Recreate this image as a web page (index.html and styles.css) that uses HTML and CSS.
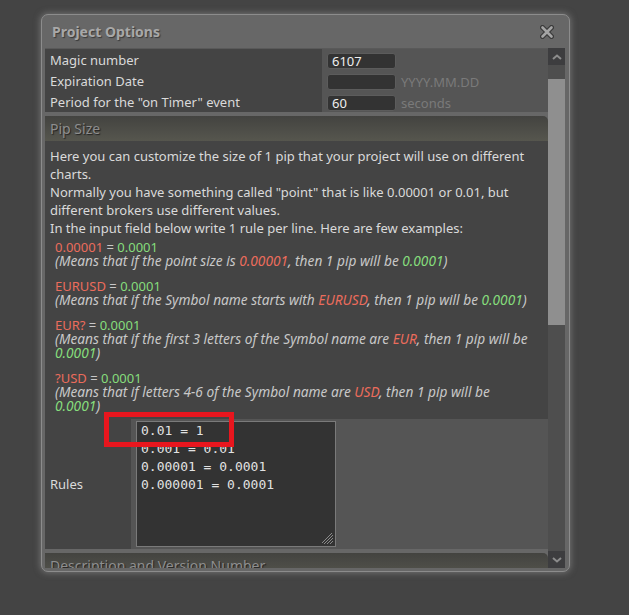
FILE: index.html
```html
<!DOCTYPE html>
<html lang="en">
<head>
  <meta charset="UTF-8">
  <title>Project Options</title>
  <link rel="stylesheet" href="styles.css">
</head>
<body>

  <div class="dialog">
    <div class="titlebar">
      <span class="title">Project Options</span>
      <svg class="close" width="14" height="14" viewBox="0 0 14 14">
        <path d="M2.5 2.5 L11.5 11.5 M11.5 2.5 L2.5 11.5" stroke="#3a3a3a" stroke-width="5" stroke-linecap="round"/>
        <path d="M2.5 2.5 L11.5 11.5 M11.5 2.5 L2.5 11.5" stroke="#a4a4a4" stroke-width="2.6" stroke-linecap="round"/>
      </svg>
    </div>

    <div class="frame">
      <div class="content">

        <!-- General options -->
        <div class="options">
          <div class="label">Magic number</div>
          <div class="value"><input class="field" type="text" value="6107"></div>
          <div class="label">Expiration Date</div>
          <div class="value"><input class="field" type="text" value=""><span class="hint">YYYY.MM.DD</span></div>
          <div class="label">Period for the "on Timer" event</div>
          <div class="value"><input class="field" type="text" value="60"><span class="hint">seconds</span></div>
        </div>

        <!-- Pip Size -->
        <div class="section">
          <div class="section-head">Pip Size</div>
          <div class="section-text">
            <p class="intro">Here you can customize the size of 1 pip that your project will use on different charts.<br>
            Normally you have something called "point" that is like 0.00001 or 0.01, but different brokers use different values.<br>
            In the input field below write 1 rule per line. Here are few examples:</p>

            <div class="example">
              <span class="red">0.00001</span> = <span class="green">0.0001</span><br>
              <i>(Means that if the point size is <span class="red">0.00001</span>, then 1 pip will be <span class="green">0.0001</span>)</i>
            </div>
            <div class="example">
              <span class="red">EURUSD</span> = <span class="green">0.0001</span><br>
              <i>(Means that if the Symbol name starts with <span class="red">EURUSD</span>, then 1 pip will be <span class="green">0.0001</span>)</i>
            </div>
            <div class="example">
              <span class="red">EUR?</span> = <span class="green">0.0001</span><br>
              <i>(Means that if the first 3 letters of the Symbol name are <span class="red">EUR</span>, then 1 pip will be <span class="green">0.0001</span>)</i>
            </div>
            <div class="example">
              <span class="red">?USD</span> = <span class="green">0.0001</span><br>
              <i>(Means that if letters 4-6 of the Symbol name are <span class="red">USD</span>, then 1 pip will be <span class="green">0.0001</span>)</i>
            </div>
          </div>

          <div class="rules">
            <div class="rules-label">Rules</div>
            <div class="rules-value">
              <div class="editor">
                <div class="code">0.01 = 1
0.001 = 0.01
0.00001 = 0.0001
0.000001 = 0.0001</div>
                <svg class="grip" width="12" height="12" viewBox="0 0 12 12">
                  <path d="M11 2 L2 11 M11 5 L5 11 M11 8 L8 11 M11 -1 L-1 11" stroke="#8a8a8a" stroke-width="1"/>
                </svg>
              </div>
            </div>
          </div>
        </div>

        <div class="section">
          <div class="section-head">Description and Version Number</div>
        </div>

      </div>

      <div class="scrollbar">
        <div class="scroll-btn">
          <svg width="10" height="6" viewBox="0 0 10 6"><path d="M1 5 L5 1.5 L9 5" fill="none" stroke="#8c8c8c" stroke-width="2"/></svg>
        </div>
        <div class="track"><div class="thumb"></div></div>
        <div class="scroll-btn">
          <svg width="10" height="6" viewBox="0 0 10 6"><path d="M1 1 L5 4.5 L9 1" fill="none" stroke="#8c8c8c" stroke-width="2"/></svg>
        </div>
      </div>
    </div>
  </div>

  <!-- annotation -->
  <div class="marker"></div>

</body>
</html>
```

FILE: styles.css
```css
body {
  margin: 0;
  width: 629px;
  height: 615px;
  overflow: hidden;
  background: #444444;
  font-family: "Noto Sans", "Open Sans", sans-serif;
  font-size: 13px;
  color: #dadada;
}
.dialog {
  margin: 14px 0 0 41px;
  width: 529px;
  height: 558px;
  box-sizing: border-box;
  background: #676767;
  border: 1px solid #8c8c8c;
  border-radius: 7px;
  box-shadow: 0 0 6px 1px rgba(150, 150, 150, 0.55);
}
.titlebar {
  height: 33px;
  display: flex;
  align-items: center;
  justify-content: space-between;
  padding: 0 15px 0 10px;
}
.title {
  font-size: 14px;
  font-weight: bold;
  color: #a8a8a8;
  text-shadow: 1px 1px 1px #3a3a3a;
}
.frame {
  display: flex;
  height: 520px;
  margin: 0 4px 0 3px;
}
.content {
  width: 503px;
  overflow: hidden;
  border-top: 1px solid #595959;
  box-sizing: border-box;
}

/* general options grid */
.options {
  display: grid;
  grid-template-columns: 277px 1fr;
  grid-auto-rows: 21px;
}
.label {
  background: #444444;
  padding: 1px 0 0 5px;
  line-height: 20px;
}
.value {
  background: #555555;
  display: flex;
  align-items: center;
  padding: 2px 0 0 5px;
  box-sizing: border-box;
}
.field {
  width: 69px;
  height: 16px;
  box-sizing: border-box;
  background: #333333;
  border: 1px solid #5c5c5c;
  border-radius: 3px;
  color: #eeeeee;
  font-family: inherit;
  font-size: 13px;
  padding: 0 4px;
  outline: none;
}
.hint {
  color: #7a7a7a;
  margin-left: 5px;
}

/* sections */
.section {
  margin-top: 4px;
}
.section + .section {
  margin-top: 4px;
}
.section-head {
  height: 25px;
  line-height: 25px;
  padding-left: 5px;
  font-size: 14px;
  color: #8e8e8e;
  text-shadow: 1px 1px 1px #222;
  background: linear-gradient(#434340, #56564e);
  border-top-right-radius: 5px;
}
.section-text {
  background: #444444;
  padding: 6px 10px 6px 5px;
}
.intro {
  margin: 0 0 3px;
  line-height: 18px;
}
.example {
  margin-left: 5px;
  line-height: 14px;
  color: #c8c8c8;
}
.example i {
  font-size: 13.7px;
}
.example + .example {
  margin-top: 11px;
}
.red {
  color: #ec6c5c;
}
.green {
  color: #86dd7c;
}

/* rules row */
.rules {
  display: flex;
  height: 130px;
}
.rules-label {
  width: 86px;
  background: #444444;
  padding-left: 5px;
  box-sizing: border-box;
  display: flex;
  align-items: center;
}
.rules-value {
  flex: 1;
  background: #555555;
  padding: 2px 5px;
}
.editor {
  position: relative;
  width: 200px;
  height: 126px;
}
.code {
  height: 100%;
  box-sizing: border-box;
  background: #333333;
  border: 1px solid #7a7a7a;
  color: #e2e2e2;
  font-family: "DejaVu Sans Mono", monospace;
  font-size: 13px;
  line-height: 18px;
  padding: 0 4px;
  white-space: pre;
  overflow: hidden;
}
.grip {
  position: absolute;
  right: 2px;
  bottom: 2px;
}

/* scrollbar */
.scrollbar {
  width: 17px;
  display: flex;
  flex-direction: column;
  background: #4e4e4e;
}
.scroll-btn {
  height: 17px;
  background: #3d3d3f;
  display: flex;
  align-items: center;
  justify-content: center;
}
.track {
  flex: 1;
  padding-top: 14px;
}
.thumb {
  height: 246px;
  background: #8f8f8f;
}

.marker {
  position: absolute;
  left: 104px;
  top: 412px;
  width: 130px;
  height: 35px;
  box-sizing: border-box;
  border: 5px solid #e8161e;
}
```
